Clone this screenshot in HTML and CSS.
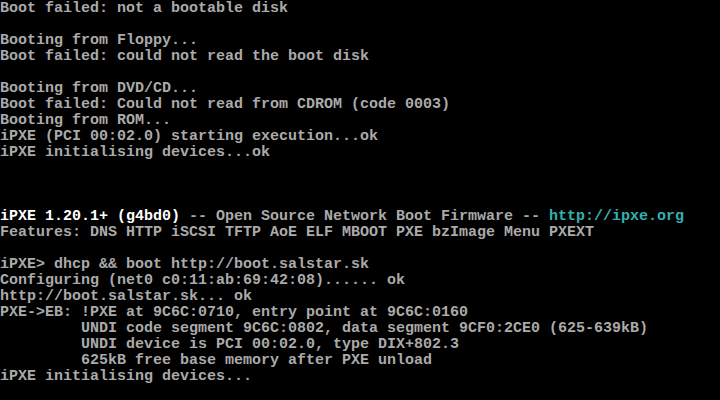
FILE: index.html
```html
<!DOCTYPE html>
<html>
<head>
<meta charset="utf-8">
<link rel="stylesheet" href="styles.css">
</head>
<body>
<pre class="console">Boot failed: not a bootable disk

Booting from Floppy...
Boot failed: could not read the boot disk

Booting from DVD/CD...
Boot failed: Could not read from CDROM (code 0003)
Booting from ROM...
iPXE (PCI 00:02.0) starting execution...ok
iPXE initialising devices...ok



<span class="white">iPXE 1.20.1+ (g4bd0)</span> -- Open Source Network Boot Firmware -- <span class="cyan">http://ipxe.org</span>
Features: DNS HTTP iSCSI TFTP AoE ELF MBOOT PXE bzImage Menu PXEXT

iPXE&gt; dhcp &amp;&amp; boot http://boot.salstar.sk
Configuring (net0 c0:11:ab:69:42:08)...... ok
http://boot.salstar.sk... ok
PXE-&gt;EB: !PXE at 9C6C:0710, entry point at 9C6C:0160
         UNDI code segment 9C6C:0802, data segment 9CF0:2CE0 (625-639kB)
         UNDI device is PCI 00:02.0, type DIX+802.3
         625kB free base memory after PXE unload
iPXE initialising devices...</pre>
</body>
</html>
```
FILE: styles.css
```css
html, body {
  margin: 0;
  padding: 0;
  background: #000;
  width: 720px;
  height: 400px;
  overflow: hidden;
}
.console {
  margin: 0;
  padding: 1px 0 0 0;
  font-family: "Liberation Mono", "DejaVu Sans Mono", monospace;
  font-size: 15px;
  line-height: 16px;
  font-weight: bold;
  color: #aaaaaa;
  white-space: pre;
}
.white {
  color: #ffffff;
}
.cyan {
  color: #33b0b0;
}
```
